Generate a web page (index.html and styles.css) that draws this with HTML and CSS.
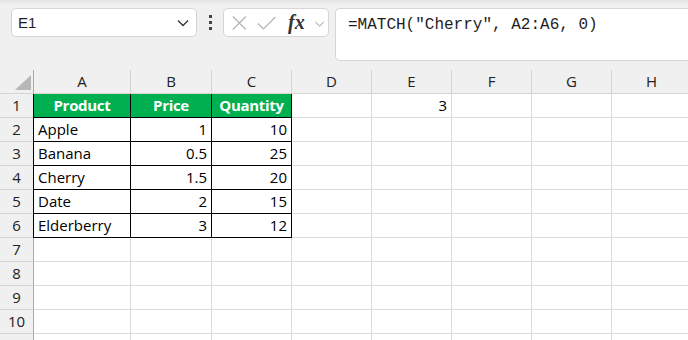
FILE: index.html
```html
<!DOCTYPE html>
<html>
<head>
<meta charset="utf-8">
<link rel="stylesheet" href="styles.css">
</head>
<body>
<div class="toolbar">
  <div class="namebox">
    <span class="ref">E1</span>
    <svg class="chev" width="12" height="8" viewBox="0 0 12 8"><polyline points="1,1.5 6,6.5 11,1.5" fill="none" stroke="#333" stroke-width="1.3"/></svg>
  </div>
  <div class="dots"><i></i><i></i><i></i></div>
  <div class="fxbox">
    <svg class="ico" width="16" height="16" viewBox="0 0 16 16"><path d="M1 1 L15 15 M15 1 L1 15" stroke="#b4b4b4" stroke-width="1.3" fill="none"/></svg>
    <svg class="ico chk" width="21" height="16" viewBox="0 0 21 16"><polyline points="1,8.5 7,14.5 20,1.5" stroke="#b4b4b4" stroke-width="1.3" fill="none"/></svg>
    <span class="fx">fx</span>
    <svg class="chev2" width="10" height="6" viewBox="0 0 10 6"><polyline points="0.5,0.8 5,5.2 9.5,0.8" fill="none" stroke="#888" stroke-width="1"/></svg>
  </div>
  <div class="formula">=MATCH("Cherry", A2:A6, 0)</div>
</div>
<div class="grid">
  <div class="c corner"><svg width="16" height="15" viewBox="0 0 16 15"><polygon points="16,0 16,15 0,15" fill="#b7b7b7"/></svg></div>
  <div class="c ch">A</div><div class="c ch">B</div><div class="c ch">C</div><div class="c ch">D</div><div class="c ch">E</div><div class="c ch">F</div><div class="c ch">G</div><div class="c ch">H</div>

  <div class="c rh">1</div>
  <div class="c t hd first">Product</div><div class="c t hd">Price</div><div class="c t hd">Quantity</div>
  <div class="c"></div><div class="c num">3</div><div class="c"></div><div class="c"></div><div class="c"></div>

  <div class="c rh">2</div>
  <div class="c t first">Apple</div><div class="c t num">1</div><div class="c t num">10</div>
  <div class="c"></div><div class="c"></div><div class="c"></div><div class="c"></div><div class="c"></div>

  <div class="c rh">3</div>
  <div class="c t first">Banana</div><div class="c t num">0.5</div><div class="c t num">25</div>
  <div class="c"></div><div class="c"></div><div class="c"></div><div class="c"></div><div class="c"></div>

  <div class="c rh">4</div>
  <div class="c t first">Cherry</div><div class="c t num">1.5</div><div class="c t num">20</div>
  <div class="c"></div><div class="c"></div><div class="c"></div><div class="c"></div><div class="c"></div>

  <div class="c rh">5</div>
  <div class="c t first">Date</div><div class="c t num">2</div><div class="c t num">15</div>
  <div class="c"></div><div class="c"></div><div class="c"></div><div class="c"></div><div class="c"></div>

  <div class="c rh">6</div>
  <div class="c t first">Elderberry</div><div class="c t num">3</div><div class="c t num">12</div>
  <div class="c"></div><div class="c"></div><div class="c"></div><div class="c"></div><div class="c"></div>

  <div class="c rh">7</div>
  <div class="c"></div><div class="c"></div><div class="c"></div><div class="c"></div><div class="c"></div><div class="c"></div><div class="c"></div><div class="c"></div>
  <div class="c rh">8</div>
  <div class="c"></div><div class="c"></div><div class="c"></div><div class="c"></div><div class="c"></div><div class="c"></div><div class="c"></div><div class="c"></div>
  <div class="c rh">9</div>
  <div class="c"></div><div class="c"></div><div class="c"></div><div class="c"></div><div class="c"></div><div class="c"></div><div class="c"></div><div class="c"></div>
  <div class="c rh">10</div>
  <div class="c"></div><div class="c"></div><div class="c"></div><div class="c"></div><div class="c"></div><div class="c"></div><div class="c"></div><div class="c"></div>
  <div class="c rh"></div>
  <div class="c"></div><div class="c"></div><div class="c"></div><div class="c"></div><div class="c"></div><div class="c"></div><div class="c"></div><div class="c"></div>
</div>
</body>
</html>
```
FILE: styles.css
```css
html, body {
  margin: 0;
  padding: 0;
  width: 688px;
  height: 340px;
  overflow: hidden;
  background: #f0f0f0;
  font-family: "Open Sans", "Liberation Sans", Arial, sans-serif;
}

.toolbar {
  height: 70px;
  box-sizing: border-box;
  display: flex;
  align-items: flex-start;
  padding: 8px 0 0 11px;
  background: linear-gradient(#e4e4e4 0px, #f0f0f0 5px);
}

.namebox {
  width: 186px;
  height: 29px;
  box-sizing: border-box;
  background: #fff;
  border: 1px solid #d6d6d6;
  border-radius: 5px;
  display: flex;
  align-items: center;
  justify-content: space-between;
  padding: 0 7px 0 6px;
}
.namebox .ref {
  font-family: "Liberation Sans", Arial, sans-serif;
  font-size: 15px;
  color: #1e1e1e;
}
.chev { display: block; }

.dots {
  width: 26px;
  height: 29px;
  display: flex;
  flex-direction: column;
  align-items: center;
  justify-content: center;
  gap: 3px;
}
.dots i {
  display: block;
  width: 3px;
  height: 3px;
  background: #444;
}

.fxbox {
  width: 106px;
  height: 29px;
  box-sizing: border-box;
  background: #fff;
  border: 1px solid #d6d6d6;
  border-radius: 5px;
  display: flex;
  align-items: center;
  padding: 0 4px 0 8px;
}
.ico { display: block; }
.chk { margin-left: 10px; }
.fx {
  margin-left: 12px;
  font-family: "Liberation Serif", "DejaVu Serif", serif;
  font-style: italic;
  font-weight: bold;
  font-size: 20px;
  color: #333;
  line-height: 1;
  margin-top: -2px;
}
.chev2 { display: block; margin-left: 10px; margin-top: 2px; }

.formula {
  margin-left: 6px;
  flex: 1;
  height: 53px;
  box-sizing: border-box;
  background: #fff;
  border: 1px solid #d6d6d6;
  border-right: none;
  border-radius: 5px 0 0 5px;
  font-family: "Liberation Mono", "DejaVu Sans Mono", monospace;
  font-size: 16px;
  color: #1e1e1e;
  padding: 6px 0 0 12px;
  line-height: 20px;
  white-space: pre;
}

.grid {
  display: grid;
  grid-template-columns: 34px 97px 81px 80px 80px 80px 80px 80px 80px;
  grid-auto-rows: 24px;
  height: 270px;
  overflow: hidden;
  background: #fff;
}

.c {
  box-sizing: border-box;
  border-right: 1px solid #dadada;
  border-bottom: 1px solid #dadada;
  font-size: 15px;
  color: #000;
  display: flex;
  align-items: flex-end;
  padding: 0 4px 3px 4px;
  line-height: 17px;
  white-space: nowrap;
}

.corner {
  background: #f0f0f0;
  border-right: 1px solid #a9a9a9;
  border-bottom: 1px solid #d4d4d4;
  align-items: flex-end;
  justify-content: flex-end;
  padding: 0 2px 3px 0;
}
.corner svg { display: block; }

.ch {
  background: #f0f0f0;
  border-right: 1px solid #d4d4d4;
  border-bottom: 1px solid #d4d4d4;
  justify-content: center;
  color: #222;
}

.rh {
  background: #f0f0f0;
  border-right: 1px solid #a9a9a9;
  border-bottom: 1px solid #d4d4d4;
  justify-content: center;
  color: #222;
  padding: 0 0 3px 0;
}

.num { justify-content: flex-end; }

.t {
  border-right-color: #000;
  border-bottom-color: #000;
}
.t.first { box-shadow: -1px 0 0 #000; }

.hd {
  background: #00b050;
  color: #fff;
  font-weight: bold;
  letter-spacing: -0.3px;
  justify-content: center;
}
```
